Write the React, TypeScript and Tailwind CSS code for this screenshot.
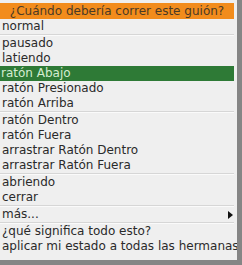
import React from "react";

type Item = { label: string; sep?: boolean; active?: boolean; sub?: boolean };

const items: Item[] = [
  { label: "normal", sep: true },
  { label: "pausado" },
  { label: "latiendo" },
  { label: "ratón Abajo", active: true },
  { label: "ratón Presionado" },
  { label: "ratón Arriba", sep: true },
  { label: "ratón Dentro" },
  { label: "ratón Fuera" },
  { label: "arrastrar Ratón Dentro" },
  { label: "arrastrar Ratón Fuera", sep: true },
  { label: "abriendo" },
  { label: "cerrar", sep: true },
  { label: "más...", sub: true, sep: true },
  { label: "¿qué significa todo esto?" },
  { label: "aplicar mi estado a todas las hermanas" },
];

export default function App() {
  return (
    <div
      className="w-[242px] h-[265px] bg-[#efefef] border-r-[5px] border-b-[5px] border-[#858585] pt-[3px] pr-[3px] overflow-hidden"
      style={{ fontFamily: '"DejaVu Sans", Verdana, sans-serif' }}
    >
      <div className="h-[16px] bg-[#f28c1c] text-[#4b3a26] text-[12px] leading-[16px] text-center whitespace-nowrap">
        ¿Cuándo debería correr este guión?
      </div>
      <div className="flex flex-col">
        {items.map((it) => (
          <React.Fragment key={it.label}>
            <div
              className={
                it.active
                  ? "h-[15px] flex items-center justify-between pl-[1px] bg-[#2e7a36] text-[#d4ecd0] text-[12px] leading-[15px] whitespace-nowrap"
                  : "h-[15px] flex items-center justify-between pl-[2px] text-[#2a2a2a] text-[12px] leading-[15px] whitespace-nowrap"
              }
            >
              <span>{it.label}</span>
              {it.sub && (
                <svg width="5" height="8" viewBox="0 0 5 8" className="mr-[1px]">
                  <path d="M0 0 L5 4 L0 8 Z" fill="#111" />
                </svg>
              )}
            </div>
            {it.sep && (
              <div className="h-[2px] flex flex-col">
                <div className="h-[1px] bg-[#d6d6d6]" />
                <div className="h-[1px] bg-[#fafafa]" />
              </div>
            )}
          </React.Fragment>
        ))}
      </div>
    </div>
  );
}
